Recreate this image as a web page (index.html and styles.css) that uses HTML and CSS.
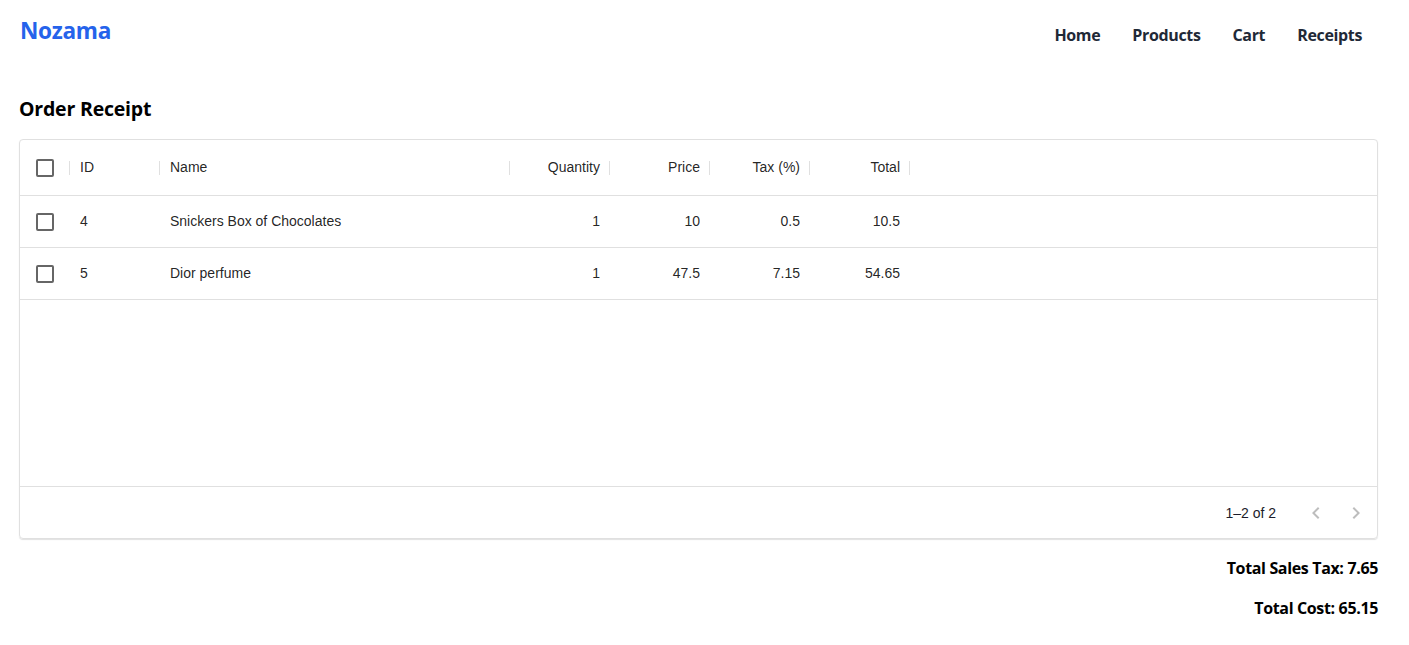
FILE: index.html
```html
<!DOCTYPE html>
<html lang="en">
<head>
<meta charset="utf-8">
<title>Nozama - Order Receipt</title>
<link rel="stylesheet" href="styles.css">
</head>
<body>
<header class="topbar">
  <a class="logo" href="#">Nozama</a>
  <nav class="nav">
    <a href="#">Home</a>
    <a href="#">Products</a>
    <a href="#">Cart</a>
    <a href="#">Receipts</a>
  </nav>
</header>
<main class="page">
  <h1 class="title">Order Receipt</h1>
  <div class="grid">
    <div class="row head">
      <div class="cell check sep"><span class="box"></span></div>
      <div class="cell sep">ID</div>
      <div class="cell sep">Name</div>
      <div class="cell num sep">Quantity</div>
      <div class="cell num sep">Price</div>
      <div class="cell num sep">Tax (%)</div>
      <div class="cell num sep">Total</div>
      <div class="cell"></div>
    </div>
    <div class="row">
      <div class="cell check"><span class="box"></span></div>
      <div class="cell">4</div>
      <div class="cell">Snickers Box of Chocolates</div>
      <div class="cell num">1</div>
      <div class="cell num">10</div>
      <div class="cell num">0.5</div>
      <div class="cell num">10.5</div>
      <div class="cell"></div>
    </div>
    <div class="row">
      <div class="cell check"><span class="box"></span></div>
      <div class="cell">5</div>
      <div class="cell">Dior perfume</div>
      <div class="cell num">1</div>
      <div class="cell num">47.5</div>
      <div class="cell num">7.15</div>
      <div class="cell num">54.65</div>
      <div class="cell"></div>
    </div>
    <div class="filler"></div>
    <div class="footer">
      <span class="range">1–2 of 2</span>
      <div class="pager">
        <button class="arrow" aria-label="Previous page"><svg viewBox="0 0 24 24" width="24" height="24"><path d="M15.41 16.59L10.83 12l4.58-4.59L14 6l-6 6 6 6 1.41-1.41z"/></svg></button>
        <button class="arrow" aria-label="Next page"><svg viewBox="0 0 24 24" width="24" height="24"><path d="M8.59 16.59L13.17 12 8.59 7.41 10 6l6 6-6 6-1.41-1.41z"/></svg></button>
      </div>
    </div>
  </div>
  <div class="totals">
    <p>Total Sales Tax: 7.65</p>
    <p>Total Cost: 65.15</p>
  </div>
</main>
</body>
</html>
```
FILE: styles.css
```css
* { box-sizing: border-box; }
html, body { margin: 0; padding: 0; background: #fff; }
body { font-family: "Open Sans", "Noto Sans", sans-serif; color: #000; }

.topbar {
  display: flex;
  justify-content: space-between;
  align-items: flex-start;
  padding: 0 47px 0 20px;
  height: 70px;
}
.logo {
  margin-top: 15px;
  font-size: 22.6px;
  font-weight: 700;
  color: #2563eb;
  text-decoration: none;
  letter-spacing: -0.3px;
}
.nav {
  display: flex;
  gap: 32px;
  margin-top: 24px;
}
.nav a {
  font-size: 16px;
  font-weight: 700;
  color: #1f2937;
  text-decoration: none;
  letter-spacing: -0.35px;
}

.page { padding: 0 31px 0 19px; }
.title {
  margin: 25px 0 16px 0;
  font-size: 19.5px;
  font-weight: 700;
  line-height: 28px;
  letter-spacing: -0.2px;
}

.grid {
  height: 400px;
  border: 1px solid #e0e0e0;
  border-radius: 4px;
  box-shadow: 0 1px 1px rgba(0,0,0,0.12);
  display: flex;
  flex-direction: column;
  font-family: "Liberation Sans", Arial, sans-serif;
  font-size: 14px;
  color: rgba(0,0,0,0.87);
}
.row {
  display: grid;
  grid-template-columns: 50px 90px 350px 100px 100px 100px 100px 1fr;
  height: 52px;
  border-bottom: 1px solid #e0e0e0;
  flex: none;
}
.row.head { height: 56px; }
.cell {
  position: relative;
  display: flex;
  align-items: center;
  padding: 0 10px 1px 10px;
  white-space: nowrap;
}
.cell.num { justify-content: flex-end; }
.cell.check { justify-content: center; padding: 0; }
.cell.sep::after {
  content: "";
  position: absolute;
  right: 0;
  top: 50%;
  width: 1px;
  height: 14px;
  margin-top: -7px;
  background: #e0e0e0;
}
.box {
  display: block;
  width: 18px;
  height: 18px;
  border: 2px solid #666;
  border-radius: 2px;
}
.filler { flex: 1; }
.footer {
  flex: none;
  height: 52px;
  border-top: 1px solid #e0e0e0;
  display: flex;
  justify-content: flex-end;
  align-items: center;
  padding-right: 1px;
}
.range { color: #1c1c2b; }
.pager { display: flex; margin-left: 20px; }
.arrow {
  width: 40px;
  height: 40px;
  padding: 8px;
  border: 0;
  background: none;
  display: flex;
  align-items: center;
  justify-content: center;
}
.arrow svg { fill: rgba(0,0,0,0.26); display: block; }

.totals {
  text-align: right;
  font-size: 16px;
  font-weight: 700;
  padding-top: 18px;
}
.totals p { margin: 0 0 18px 0; line-height: 22px; letter-spacing: -0.35px; }
```
